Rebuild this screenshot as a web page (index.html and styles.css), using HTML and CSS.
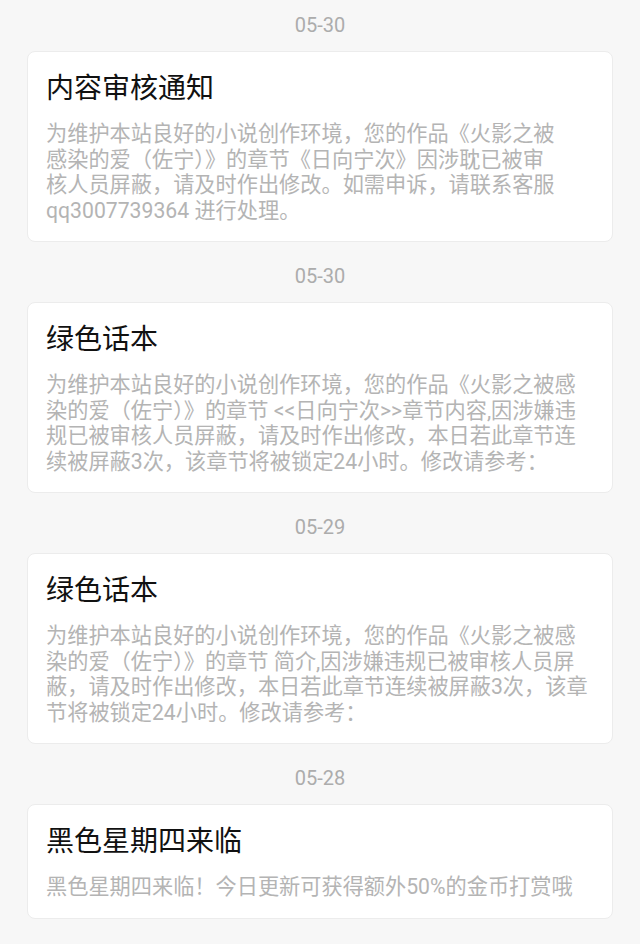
FILE: index.html
```html
<!DOCTYPE html>
<html lang="zh-CN">
<head>
  <meta charset="UTF-8" />
  <meta name="viewport" content="width=device-width, initial-scale=1" />
  <title>消息通知</title>
  <link rel="stylesheet" href="styles.css">
</head>
<body>

  <div class="lista">

    <div class="grupo">
      <div class="data">05-30</div>
      <div class="cartao">
        <div class="titulo">内容审核通知</div>
        <div class="texto estreito">为维护本站良好的小说创作环境，您的作品《火影之被感染的爱（佐宁）》的章节《日向宁次》因涉耽已被审核人员屏蔽，请及时作出修改。如需申诉，请联系客服qq3007739364 进行处理。</div>
      </div>
    </div>

    <div class="grupo">
      <div class="data">05-30</div>
      <div class="cartao">
        <div class="titulo">绿色话本</div>
        <div class="texto">为维护本站良好的小说创作环境，您的作品《火影之被感染的爱（佐宁）》的章节 &lt;&lt;日向宁次&gt;&gt;章节内容,因涉嫌违规已被审核人员屏蔽，请及时作出修改，本日若此章节连续被屏蔽3次，该章节将被锁定24小时。修改请参考：</div>
      </div>
    </div>

    <div class="grupo">
      <div class="data">05-29</div>
      <div class="cartao">
        <div class="titulo">绿色话本</div>
        <div class="texto">为维护本站良好的小说创作环境，您的作品《火影之被感染的爱（佐宁）》的章节 简介,因涉嫌违规已被审核人员屏蔽，请及时作出修改，本日若此章节连续被屏蔽3次，该章节将被锁定24小时。修改请参考：</div>
      </div>
    </div>

    <div class="grupo">
      <div class="data">05-28</div>
      <div class="cartao">
        <div class="titulo">黑色星期四来临</div>
        <div class="texto">黑色星期四来临！今日更新可获得额外50%的金币打赏哦</div>
      </div>
    </div>

  </div>

</body>
</html>
```

FILE: styles.css
```css
body {
  margin: 0;
  background-color: #f7f7f7;
  font-family: Roboto, "Noto Sans CJK SC", sans-serif;
}
.lista {
  padding: 0 27px;
}
.grupo {
  margin-bottom: 9px;
}
.data {
  padding: 15px 0 16px;
  line-height: 20px;
  font-size: 20px;
  text-align: center;
  color: #acacac;
}
.cartao {
  background-color: #fff;
  border: 1px solid #ececec;
  border-radius: 8px;
  padding: 19px 18px 18px;
}
.titulo {
  font-size: 28px;
  line-height: 36px;
  color: #111;
  margin-bottom: 14px;
}
.texto {
  font-size: 21.2px;
  line-height: 25.5px;
  color: #b4b4b4;
}
.texto.estreito {
  max-width: 511px;
}
```
